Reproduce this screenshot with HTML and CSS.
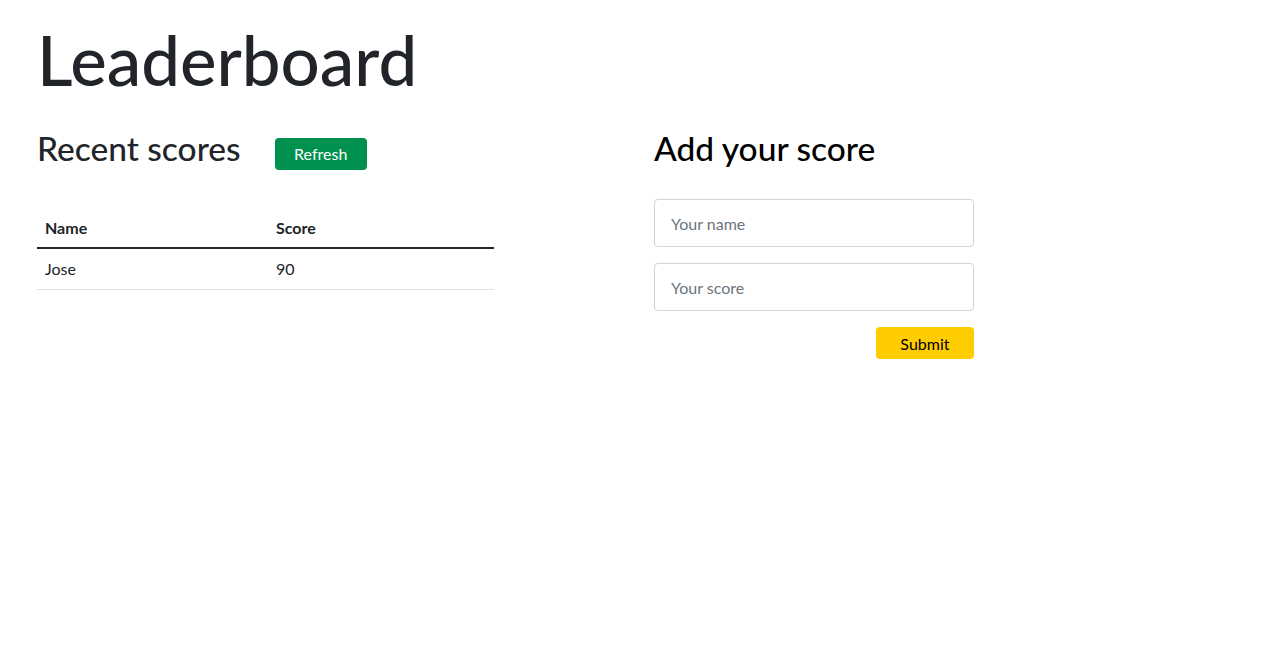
FILE: index.html
```html
<!DOCTYPE html>
<html>
<head>
<meta charset="utf-8">
<link rel="stylesheet" href="styles.css">
</head>
<body>
<main class="page">
  <h1 class="title">Leaderboard</h1>
  <div class="columns">
    <section class="col-left">
      <div class="section-head">
        <h2 class="heading">Recent scores</h2>
        <button class="btn btn-green">Refresh</button>
      </div>
      <table class="scores">
        <thead>
          <tr><th class="c-name">Name</th><th>Score</th></tr>
        </thead>
        <tbody>
          <tr><td class="c-name">Jose</td><td>90</td></tr>
        </tbody>
      </table>
    </section>
    <section class="col-right">
      <h2 class="heading heading-black">Add your score</h2>
      <form class="score-form">
        <input class="field" type="text" placeholder="Your name">
        <input class="field" type="text" placeholder="Your score">
        <div class="actions"><button type="button" class="btn btn-yellow">Submit</button></div>
      </form>
    </section>
  </div>
</main>
</body>
</html>
```
FILE: styles.css
```css
* { box-sizing: border-box; }
body {
  margin: 0;
  font-family: "Lato", "Noto Sans", sans-serif;
  color: #212529;
  background: #fff;
}
.page { padding: 20px 37px; }
.title {
  margin: 0;
  font-size: 69px;
  font-weight: 500;
  line-height: 80px;
  color: #212529;
}
.columns {
  display: flex;
  gap: 160px;
  margin-top: 28px;
}
.col-left { width: 457px; }
.col-right { width: 320px; }
.section-head {
  display: flex;
  align-items: center;
  gap: 34px;
  height: 40px;
}
.heading {
  margin: 0;
  font-size: 33.5px;
  font-weight: 500;
  line-height: 40px;
}
.heading-black { color: #000; }
.btn {
  font-family: inherit;
  font-size: 16px;
  border: none;
  border-radius: 4px;
  height: 32px;
  padding: 0 19.5px;
  cursor: pointer;
}
.btn-green { background: #00914f; color: #fff; margin-top: 11px; }
.btn-yellow { background: #ffcc00; color: #000; padding: 0 24.5px; }
.scores {
  width: 100%;
  border-collapse: collapse;
  margin-top: 40px;
  font-size: 16px;
}
.scores th, .scores td {
  text-align: left;
  padding: 8px 8px;
  height: 41px;
}
.scores th {
  font-weight: 700;
  border-bottom: 2px solid #212529;
  height: 40px;
}
.scores td { border-bottom: 1px solid #dee2e6; }
.c-name { width: 231px; }
.score-form {
  margin-top: 31px;
  display: flex;
  flex-direction: column;
  gap: 16px;
}
.field {
  height: 48px;
  width: 100%;
  border: 1px solid #ced4da;
  border-radius: 4px;
  padding: 0 16px;
  font-family: inherit;
  font-size: 16px;
  color: #212529;
}
.field::placeholder { color: #6c757d; }
.actions { display: flex; justify-content: flex-end; }
```
